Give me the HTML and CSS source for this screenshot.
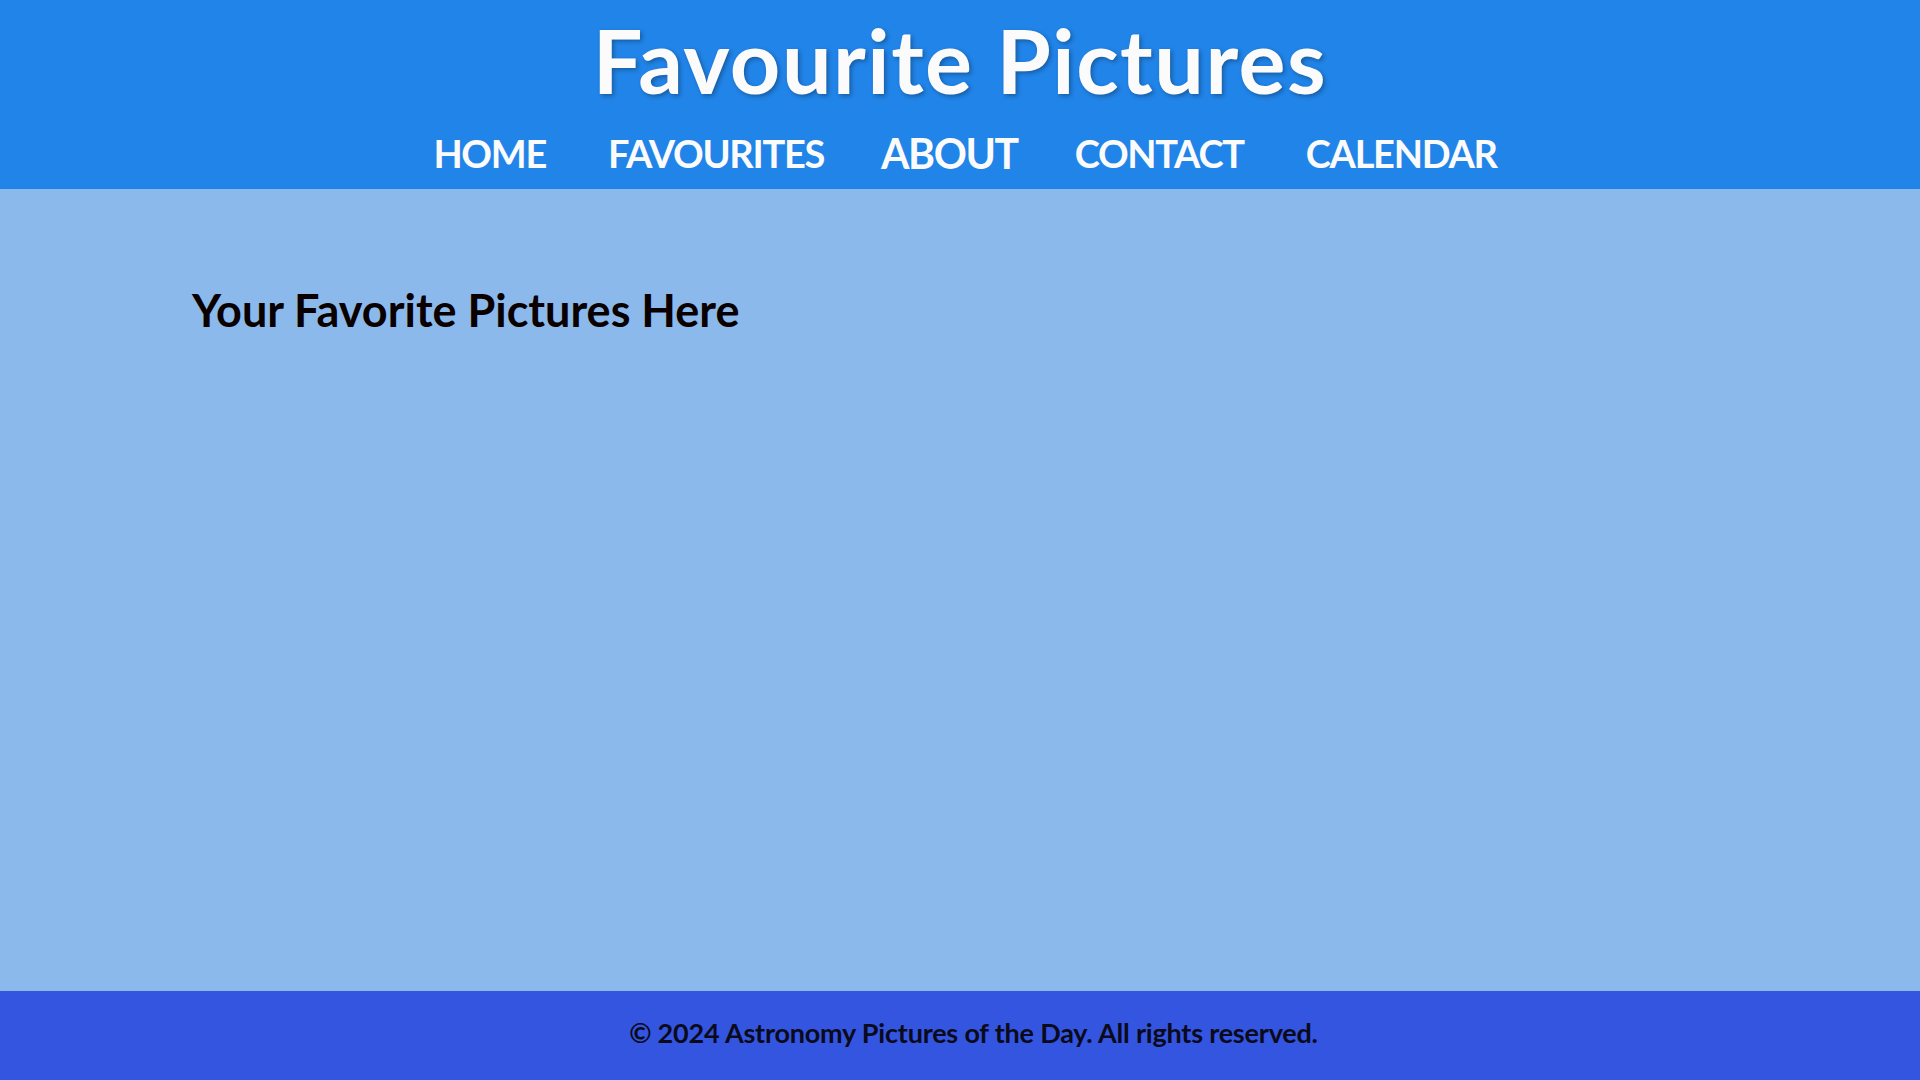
FILE: index.html
```html
<!DOCTYPE html>
<html lang="en">
<head>
<meta charset="utf-8">
<title>Favourite Pictures</title>
<link rel="stylesheet" href="styles.css">
</head>
<body>
<header class="site-header">
  <h1 class="site-title">Favourite Pictures</h1>
  <nav class="site-nav">
    <a class="nav-link" href="#">HOME</a>
    <a class="nav-link" href="#">FAVOURITES</a>
    <a class="nav-link nav-link-hover" href="#">ABOUT</a>
    <a class="nav-link" href="#">CONTACT</a>
    <a class="nav-link" href="#">CALENDAR</a>
  </nav>
</header>
<main class="content">
  <h2 class="content-title">Your Favorite Pictures Here</h2>
</main>
<footer class="site-footer">
  <p class="footer-text">© 2024 Astronomy Pictures of the Day. All rights reserved.</p>
</footer>
</body>
</html>
```
FILE: styles.css
```css
html, body {
  margin: 0;
  padding: 0;
}
body {
  min-height: 100vh;
  display: flex;
  flex-direction: column;
  font-family: Lato, "Open Sans", sans-serif;
  font-weight: 700;
  background: #8bb9eb;
}
.site-header {
  background: #2184e8;
  padding: 7px 0 13px;
  display: flex;
  flex-direction: column;
  align-items: center;
}
.site-title {
  margin: 0;
  font-size: 88px;
  line-height: 106px;
  font-weight: 700;
  color: #fbfbfb;
  letter-spacing: 1.5px;
  text-shadow: 2px 2px 4px rgba(0, 0, 0, 0.3);
}
.site-nav {
  margin-top: 17px;
  display: flex;
  gap: 62px;
  padding-left: 10px;
}
.nav-link {
  font-size: 38px;
  line-height: 46px;
  color: #fbfbfb;
  text-decoration: none;
  letter-spacing: -1.3px;
}
.nav-link-hover {
  transform: scale(1.08);
}
.content {
  flex: 1;
  padding: 94px 192px 0;
}
.content-title {
  margin: 0;
  font-size: 45px;
  line-height: 54px;
  color: #0a0000;
}
.site-footer {
  background: #3355e0;
  height: 89px;
  display: flex;
  align-items: center;
  justify-content: center;
  padding-left: 27px;
}
.footer-text {
  margin: 0 0 6px;
  font-size: 27px;
  line-height: 32px;
  color: #0a0a1a;
  letter-spacing: -0.2px;
}
```
